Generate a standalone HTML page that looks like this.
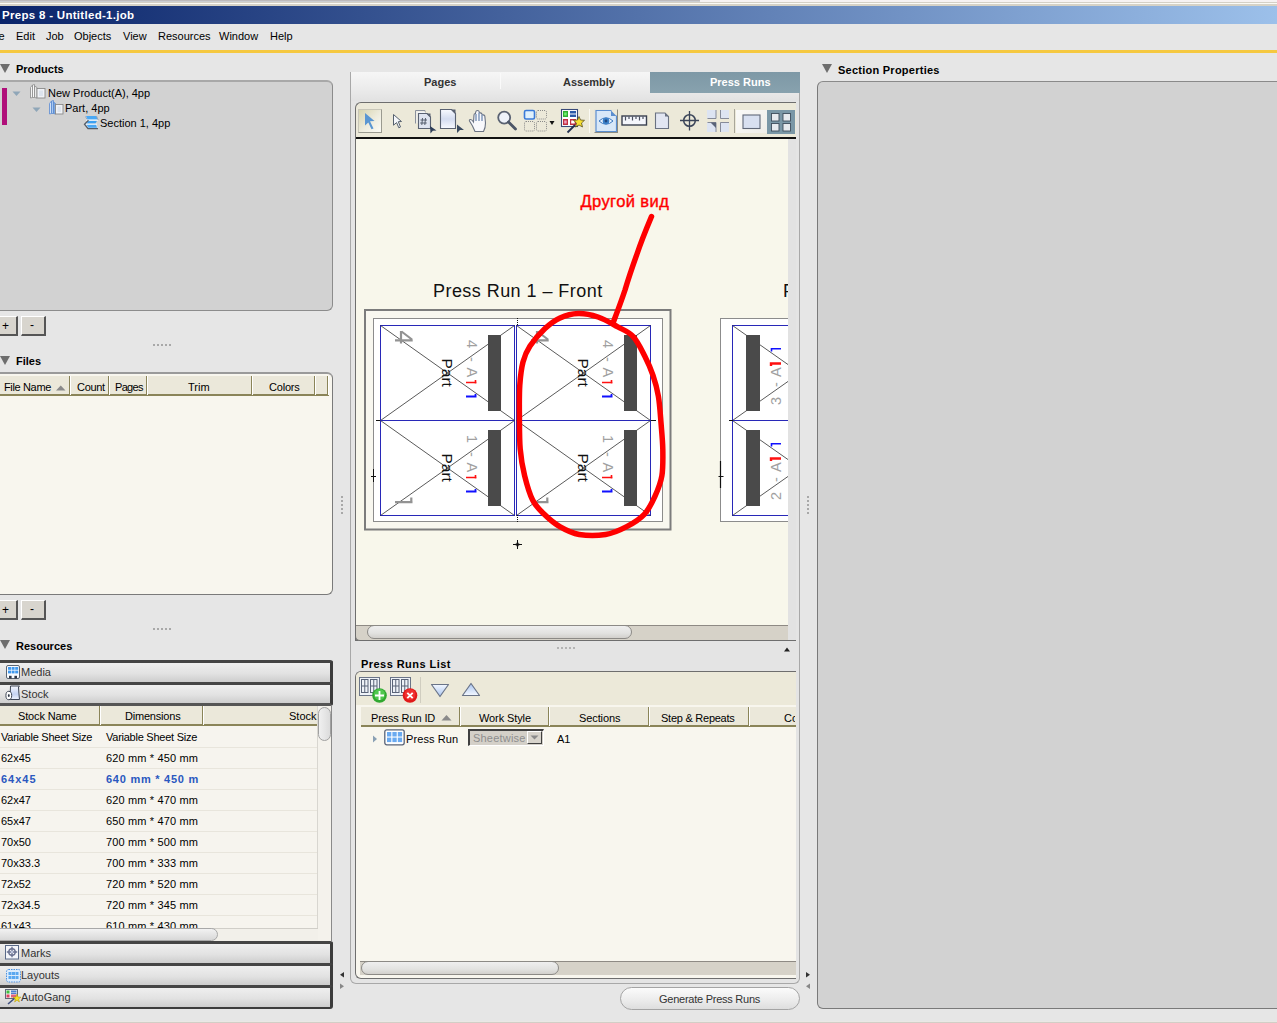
<!DOCTYPE html>
<html><head><meta charset="utf-8">
<style>
*{margin:0;padding:0;box-sizing:border-box}
html,body{width:1277px;height:1023px;overflow:hidden;background:#e6e6e6;font-family:"Liberation Sans",sans-serif;font-size:11px;color:#000}
.a{position:absolute}
.t{position:absolute;white-space:nowrap;line-height:1}
.b{font-weight:bold}
.tri{position:absolute;width:0;height:0;border-left:5px solid transparent;border-right:5px solid transparent;border-top:9.5px solid #6e6e6e}
.btn{position:absolute;background:#d8d5ce;border-top:1px solid #fff;border-left:1px solid #fff;border-right:2px solid #555;border-bottom:2px solid #555}
.hdr{position:absolute;background:#ebe8da;border-bottom:2px solid #8a8458}
.sep{position:absolute;top:0;bottom:0;width:2px;background:#8a8458;border-right:1px solid #fff}
.acc{position:absolute;left:-4px;width:337px;height:25px;border:3px solid #3c3c3c;border-top-color:#454545;border-left:none;border-radius:0 3px 3px 0;background:linear-gradient(#efefef,#e2e2e2 55%,#cdcdcd)}
.acc .t{color:#333;font-size:11px}
.dots{position:absolute;height:2px;background:repeating-linear-gradient(90deg,#a8a8a8 0 2px,transparent 2px 4px)}
.vdots{position:absolute;width:2px;background:repeating-linear-gradient(180deg,#a8a8a8 0 2px,transparent 2px 4px)}
</style></head><body>

<!-- top strip -->
<div class="a" style="left:0;top:0;width:1277px;height:6px;background:linear-gradient(#d4d0c6 0,#d4d0c6 3px,#fafaf6 3px,#fafaf6 4px,#d6d2c6 4px)"></div>
<div class="a" style="left:0;top:0;width:700px;height:2px;background:linear-gradient(#b6b0b0,#d2d8de)"></div>
<div class="a" style="left:700px;top:0;width:577px;height:2px;background:#f6f2f2"></div>
<!-- title bar -->
<div class="a" style="left:0;top:6px;width:1277px;height:18px;background:linear-gradient(90deg,#0a246a,#9cc0ea)"></div>
<div class="t b" style="left:2px;top:10px;color:#fff;font-size:11.5px;letter-spacing:0.3px">Preps 8 - Untitled-1.job</div>

<!-- menu -->
<div class="a" style="left:0;top:24px;width:1277px;height:26px;background:#e6e6e6"></div>
<div class="t" style="left:-13px;top:31px">File</div>
<div class="t" style="left:16px;top:31px">Edit</div>
<div class="t" style="left:46px;top:31px">Job</div>
<div class="t" style="left:74px;top:31px">Objects</div>
<div class="t" style="left:123px;top:31px">View</div>
<div class="t" style="left:158px;top:31px">Resources</div>
<div class="t" style="left:219px;top:31px">Window</div>
<div class="t" style="left:270px;top:31px">Help</div>
<div class="a" style="left:0;top:50px;width:1277px;height:3px;background:#f5c840"></div>

<!-- LEFT COLUMN -->
<div class="tri" style="left:0;top:64px"></div>
<div class="t b" style="left:16px;top:64px">Products</div>
<div class="a" style="left:-6px;top:80px;width:339px;height:231px;background:#d2d2d2;border:1px solid #8c8c8c;border-top:2px solid #a8a8a8;border-radius:6px"></div>


<!-- products tree -->
<div class="a" style="left:2px;top:88px;width:5px;height:37px;background:#b0107a"></div>
<svg class="a" style="left:12px;top:91px" width="9" height="6"><path d="M0.5 0.5 L8.5 0.5 L4.5 5 Z" fill="#8fa6b8"/></svg>
<svg class="a" style="left:29px;top:84px" width="17" height="15" viewBox="0 0 17 15">
<path d="M1.5 3.5 L3.5 1 L3.5 13.5 L1.5 14 Z" fill="#f4f4f4" stroke="#8a8a8a" stroke-width="0.8"/>
<path d="M3.5 1 L5.5 0.5 L5.5 13.5 L3.5 13.5 Z" fill="#fafafa" stroke="#8a8a8a" stroke-width="0.8"/>
<path d="M5.5 2 L8 3.5 L8 14 L5.5 13.5 Z" fill="#eaeaea" stroke="#8a8a8a" stroke-width="0.8"/>
<rect x="8" y="4.5" width="8" height="9.5" fill="#f0f2f6" stroke="#8a8a8a" stroke-width="0.9"/>
<rect x="10" y="6.5" width="4" height="5.5" fill="#dde4ee"/>
</svg>
<div class="t" style="left:48px;top:88px">New Product(A), 4pp</div>
<svg class="a" style="left:32px;top:107px" width="9" height="6"><path d="M0.5 0.5 L8.5 0.5 L4.5 5 Z" fill="#8fa6b8"/></svg>
<svg class="a" style="left:48px;top:100px" width="16" height="15" viewBox="0 0 16 15">
<path d="M1.5 3.5 L3.5 1 L3.5 13.5 L1.5 14 Z" fill="#cfe0f6" stroke="#5b8ad0" stroke-width="0.8"/>
<path d="M3.5 1 L5.5 0.5 L5.5 13.5 L3.5 13.5 Z" fill="#a9c8f0" stroke="#5b8ad0" stroke-width="0.8"/>
<path d="M5.5 2 L7.5 3.5 L7.5 14 L5.5 13.5 Z" fill="#7ea8e0" stroke="#5b8ad0" stroke-width="0.8"/>
<rect x="7.5" y="4.5" width="7.5" height="9.5" fill="#f0f2f6" stroke="#8a8a8a" stroke-width="0.9"/>
<rect x="9.5" y="6.5" width="3.5" height="5.5" fill="#dde4ee"/>
</svg>
<div class="t" style="left:65px;top:103px">Part, 4pp</div>
<svg class="a" style="left:83px;top:115px" width="16" height="15" viewBox="0 0 16 15">
<path d="M3 1 L13.5 1 L15 5 L5 5.5 L2 9 L5 13.5 L15 13.5 L13.5 9.5 L4 9 L6 5.5 L3 5 Z" fill="#cfe6fa"/>
<path d="M3 1 H13.5 L14.8 4.5 H4.5 Z" fill="#4aa8f4"/>
<path d="M5.5 5.8 H14 L12.5 8.6 H3.5 Z" fill="#3aa0f2"/>
<path d="M3.5 9.6 H13 L14 12.8 H5.5 Z" fill="#4aa8f4"/>
<path d="M3 5.2 H15 M2.5 9.2 H14" stroke="#f4faff" stroke-width="1"/>
<path d="M5.5 5.3 L1.5 9.2 L5 13.6 H15" fill="none" stroke="#555c66" stroke-width="1.3"/>
<path d="M2.5 1.5 L4 4.5 M13.5 1 L15.2 5" fill="none" stroke="#98a2b0" stroke-width="0.9"/>
</svg>
<div class="t" style="left:100px;top:118px">Section 1, 4pp</div>
<div class="btn" style="left:-4px;top:316px;width:22px;height:20px"></div>
<div class="t" style="left:2px;top:320px;font-size:12px">+</div>
<div class="btn" style="left:21px;top:316px;width:25px;height:20px"></div>
<div class="t" style="left:30px;top:319px;font-size:12px">-</div>
<div class="dots" style="left:153px;top:344px;width:20px"></div>

<div class="tri" style="left:0;top:356px"></div>
<div class="t b" style="left:16px;top:356px">Files</div>
<div class="a" style="left:-6px;top:372px;width:339px;height:223px;background:#f8f6ee;border:1px solid #7a7a7a;border-top:2px solid #9a9a9a;border-radius:6px"></div>
<div class="hdr" style="left:0;top:376px;width:329px;height:20px"></div>


<div class="sep" style="left:69px;top:376px;height:19px;bottom:auto"></div>
<div class="sep" style="left:108px;top:376px;height:19px;bottom:auto"></div>
<div class="sep" style="left:146px;top:376px;height:19px;bottom:auto"></div>
<div class="sep" style="left:251px;top:376px;height:19px;bottom:auto"></div>
<div class="sep" style="left:314px;top:376px;height:19px;bottom:auto"></div>
<div class="sep" style="left:327px;top:376px;height:19px;bottom:auto"></div>
<div class="t" style="left:4px;top:382px;letter-spacing:-0.35px">File Name</div>
<svg class="a" style="left:56px;top:385px" width="10" height="6"><path d="M0 5.5 L9.5 5.5 L4.75 0.5 Z" fill="#8a8a8a"/></svg>
<div class="t" style="left:77px;top:382px;letter-spacing:-0.3px">Count</div>
<div class="t" style="left:115px;top:382px;letter-spacing:-0.7px">Pages</div>
<div class="t" style="left:188px;top:382px">Trim</div>
<div class="t" style="left:269px;top:382px;letter-spacing:-0.2px">Colors</div>
<div class="btn" style="left:-4px;top:600px;width:22px;height:20px"></div>
<div class="t" style="left:2px;top:604px;font-size:12px">+</div>
<div class="btn" style="left:21px;top:600px;width:25px;height:20px"></div>
<div class="t" style="left:30px;top:603px;font-size:12px">-</div>
<div class="dots" style="left:153px;top:628px;width:20px"></div>

<div class="tri" style="left:0;top:640px"></div>
<div class="t b" style="left:16px;top:641px">Resources</div>

<div class="acc" style="top:660px"></div>
<div class="acc" style="top:682px;height:24px;border-bottom-color:#555"></div>

<div class="acc" style="top:941px"></div>
<div class="acc" style="top:963px"></div>
<div class="acc" style="top:985px;height:24px;border-bottom-width:2px"></div>


<!-- accordion labels -->
<svg class="a" style="left:6px;top:665px" width="14" height="14" viewBox="0 0 14 14">
<rect x="0.5" y="0.5" width="13" height="13" rx="1.5" fill="#f8fbff" stroke="#5a6472" stroke-width="1"/>
<g fill="#3f98ee"><rect x="2" y="2" width="3" height="2.8"/><rect x="5.6" y="2" width="3" height="2.8"/><rect x="9.2" y="2" width="3" height="2.8"/><rect x="2" y="5.6" width="3" height="2.8"/><rect x="5.6" y="5.6" width="3" height="2.8"/><rect x="9.2" y="5.6" width="3" height="2.8"/></g>
<rect x="3" y="10.8" width="2.6" height="2.7" fill="#2e3646"/><rect x="8.4" y="10.8" width="2.6" height="2.7" fill="#2e3646"/>
</svg>
<div class="t" style="left:21px;top:667px;color:#333">Media</div>
<svg class="a" style="left:5px;top:685px" width="16" height="16" viewBox="0 0 16 16">
<defs><linearGradient id="stg" x1="0" y1="0" x2="0" y2="1"><stop offset="0" stop-color="#f6f8fe"/><stop offset="0.6" stop-color="#c4d2f2"/><stop offset="1" stop-color="#eef2fc"/></linearGradient></defs>
<path d="M5.5 1 H14.5 L13.5 2 Q13.8 8 14.5 14.5 H5 Z" fill="url(#stg)" stroke="#3c4454" stroke-width="1"/>
<ellipse cx="3.8" cy="10.5" rx="2.9" ry="4.2" fill="#fff" stroke="#3c4454" stroke-width="1"/>
<ellipse cx="3.8" cy="10.5" rx="0.9" ry="1.6" fill="#2e3646"/>
</svg>
<div class="t" style="left:21px;top:689px;color:#333">Stock</div>

<!-- stock table -->
<div class="a" style="left:0;top:706px;width:318px;height:222px;background:#f6f4ee;overflow:hidden">
  <div class="hdr" style="left:0;top:0;width:318px;height:20px"></div>
  <div class="sep" style="left:99px;top:0;height:19px;bottom:auto"></div>
  <div class="sep" style="left:202px;top:0;height:19px;bottom:auto"></div>
  <div class="t" style="left:18px;top:5px;letter-spacing:-0.15px">Stock Name</div>
  <div class="t" style="left:125px;top:5px;letter-spacing:-0.2px">Dimensions</div>
  <div class="t" style="left:289px;top:5px">Stock</div>
  <div class="a" style="left:0;top:41px;width:318px;height:1px;background:#e8e5dc"></div>
  <div class="a" style="left:0;top:62px;width:318px;height:1px;background:#e8e5dc"></div>
  <div class="a" style="left:0;top:83px;width:318px;height:1px;background:#e8e5dc"></div>
  <div class="a" style="left:0;top:104px;width:318px;height:1px;background:#e8e5dc"></div>
  <div class="a" style="left:0;top:125px;width:318px;height:1px;background:#e8e5dc"></div>
  <div class="a" style="left:0;top:146px;width:318px;height:1px;background:#e8e5dc"></div>
  <div class="a" style="left:0;top:167px;width:318px;height:1px;background:#e8e5dc"></div>
  <div class="a" style="left:0;top:188px;width:318px;height:1px;background:#e8e5dc"></div>
  <div class="a" style="left:0;top:209px;width:318px;height:1px;background:#e8e5dc"></div>
  <div class="t" style="left:1px;top:26px;letter-spacing:-0.25px">Variable Sheet Size</div>
  <div class="t" style="left:106px;top:26px;letter-spacing:-0.25px">Variable Sheet Size</div>
  <div class="t" style="left:1px;top:47px">62x45</div><div class="t" style="left:106px;top:47px;letter-spacing:0.15px">620 mm * 450 mm</div>
  <div class="t b" style="left:1px;top:68px;color:#2a58c0;letter-spacing:1px">64x45</div><div class="t b" style="left:106px;top:68px;color:#2a58c0;letter-spacing:0.75px">640 mm * 450 m</div>
  <div class="t" style="left:1px;top:89px">62x47</div><div class="t" style="left:106px;top:89px;letter-spacing:0.15px">620 mm * 470 mm</div>
  <div class="t" style="left:1px;top:110px">65x47</div><div class="t" style="left:106px;top:110px;letter-spacing:0.15px">650 mm * 470 mm</div>
  <div class="t" style="left:1px;top:131px">70x50</div><div class="t" style="left:106px;top:131px;letter-spacing:0.15px">700 mm * 500 mm</div>
  <div class="t" style="left:1px;top:152px">70x33.3</div><div class="t" style="left:106px;top:152px;letter-spacing:0.15px">700 mm * 333 mm</div>
  <div class="t" style="left:1px;top:173px">72x52</div><div class="t" style="left:106px;top:173px;letter-spacing:0.15px">720 mm * 520 mm</div>
  <div class="t" style="left:1px;top:194px">72x34.5</div><div class="t" style="left:106px;top:194px;letter-spacing:0.15px">720 mm * 345 mm</div>
  <div class="t" style="left:1px;top:215px">61x43</div><div class="t" style="left:106px;top:215px;letter-spacing:0.15px">610 mm * 430 mm</div>
</div>
<!-- v scrollbar -->
<div class="a" style="left:317px;top:706px;width:15px;height:235px;background:#f4f2ec;border-left:1px solid #d8d6d0;border-right:1px solid #8a8a8a"></div>
<div class="a" style="left:318px;top:707px;width:13px;height:34px;border-radius:7px;background:linear-gradient(90deg,#f0f0f0,#dcdcdc);border:1px solid #a0a0a0"></div>
<!-- h scrollbar -->
<div class="a" style="left:0;top:928px;width:318px;height:13px;background:#f2f0ea;border-top:1px solid #d0cec8"></div>
<div class="a" style="left:-10px;top:928px;width:228px;height:13px;border-radius:7px;background:linear-gradient(#f2f2f2,#d8d8d8);border:1px solid #a8a8a8"></div>

<svg class="a" style="left:5px;top:945px" width="14" height="15" viewBox="0 0 14 15">
<rect x="0.5" y="0.5" width="13" height="13.5" fill="#f4f6fa" stroke="#5a6a88"/>
<circle cx="7" cy="7" r="3.2" fill="none" stroke="#6a7290" stroke-width="1.4"/>
<path d="M7 1.8 V12.2 M1.8 7 H12.2" stroke="#6a7290" stroke-width="1.4"/>
<circle cx="7" cy="7" r="1.2" fill="#c0c8e0"/>
</svg>
<div class="t" style="left:21px;top:948px;color:#333">Marks</div>
<svg class="a" style="left:6px;top:969px" width="15" height="14" viewBox="0 0 15 14">
<rect x="0.5" y="0.5" width="14" height="12.5" rx="2" fill="#dcecfc" stroke="#4a90e0" stroke-dasharray="1.5 1"/>
<g fill="#5aa8f0"><rect x="2.5" y="3" width="3" height="3"/><rect x="6" y="3" width="3" height="3"/><rect x="9.5" y="3" width="3" height="3"/><rect x="2.5" y="7" width="3" height="3"/><rect x="6" y="7" width="3" height="3"/><rect x="9.5" y="7" width="3" height="3"/></g>
</svg>
<div class="t" style="left:21px;top:970px;color:#333">Layouts</div>
<svg class="a" style="left:5px;top:989px" width="17" height="16" viewBox="0 0 17 16">
<rect x="0.5" y="0.5" width="12" height="9" fill="#f0f0f0" stroke="#606878"/>
<rect x="1.5" y="1.5" width="3" height="3" fill="#40c040"/><rect x="6" y="1.5" width="5.5" height="1.5" fill="#4a80d0"/><rect x="6" y="3.5" width="5.5" height="1.5" fill="#4a80d0"/>
<rect x="1.5" y="5.5" width="3" height="3" fill="#e04060"/><rect x="6" y="5.5" width="5.5" height="3" fill="#e06080"/>
<path d="M3 15 L10 9" stroke="#405080" stroke-width="1.6"/>
<path d="M12 5 L13 8 L16 8.2 L13.6 10 L14.4 13 L12 11.2 L9.6 13 L10.4 10 L8 8.2 L11 8 Z" fill="#f4e020" stroke="#b09000" stroke-width="0.5"/>
</svg>
<div class="t" style="left:21px;top:992px;color:#333">AutoGang</div>

<!-- CENTER -->
<div class="a" style="left:350px;top:72px;width:450px;height:912px;border:1px solid #a8a8a8;border-top:none;border-radius:0 0 6px 6px;background:#e4e4e4"></div>


<!-- tab bar -->
<div class="a" style="left:351px;top:72px;width:448px;height:29px;background:linear-gradient(#f6f6f6,#ececec 55%,#e2e2e2)"></div>
<div class="a" style="left:500px;top:73px;width:1px;height:16px;background:#dcdcdc;border-right:1px solid #fafafa"></div>
<div class="t b" style="left:424px;top:77px;color:#333">Pages</div>
<div class="t b" style="left:563px;top:77px;color:#333">Assembly</div>
<div class="a" style="left:650px;top:72px;width:150px;height:21px;background:linear-gradient(#7d98a6,#88a2ae)"></div>
<div class="t b" style="left:710px;top:77px;color:#fff">Press Runs</div>

<!-- toolbar -->
<div class="a" style="left:355px;top:102px;width:441px;height:36px;background:#ece9d9;border-top:1px solid #6e6e6e;border-left:1px solid #6e6e6e;border-radius:6px 0 0 0"></div>
<div class="a" style="left:356px;top:137px;width:440px;height:2px;background:#111"></div>


<!-- CANVAS START -->
<svg class="a" style="left:356px;top:139px" width="432" height="486" viewBox="356 139 432 486" font-family="Liberation Sans">
<rect x="356" y="139" width="432" height="486" fill="#f8f7eb"/>
<text x="433" y="297" font-size="18" fill="#111" letter-spacing="0.45">Press Run 1 – Front</text>
<text x="783" y="297" font-size="18" fill="#111">P</text>
<rect x="365" y="310" width="305.5" height="219.5" fill="#f8f7ef" stroke="#7c7c7c" stroke-width="2"/>
<rect x="373.5" y="318.5" width="289" height="203" fill="#fff" stroke="#8c8c8c" stroke-width="1"/>
<rect x="380.5" y="325.5" width="134" height="95" fill="#fff" stroke="#2828b8" stroke-width="1"/>
<path d="M380.5 325.5 L514.5 420.5 M514.5 325.5 L380.5 420.5" stroke="#303030" stroke-width="0.8"/>
<rect x="380.5" y="420.5" width="134" height="95" fill="#fff" stroke="#2828b8" stroke-width="1"/>
<path d="M380.5 420.5 L514.5 515.5 M514.5 420.5 L380.5 515.5" stroke="#303030" stroke-width="0.8"/>
<rect x="516.5" y="325.5" width="134" height="95" fill="#fff" stroke="#2828b8" stroke-width="1"/>
<path d="M516.5 325.5 L650.5 420.5 M650.5 325.5 L516.5 420.5" stroke="#303030" stroke-width="0.8"/>
<rect x="516.5" y="420.5" width="134" height="95" fill="#fff" stroke="#2828b8" stroke-width="1"/>
<path d="M516.5 420.5 L650.5 515.5 M650.5 420.5 L516.5 515.5" stroke="#303030" stroke-width="0.8"/>
<rect x="488" y="335" width="13" height="76" fill="#4a4a4a"/>
<rect x="488" y="430" width="13" height="76" fill="#4a4a4a"/>
<rect x="624" y="335" width="13" height="76" fill="#4a4a4a"/>
<rect x="624" y="430" width="13" height="76" fill="#4a4a4a"/>
<text transform="translate(441.5,358.5) rotate(90)" font-size="15.5" fill="#111">Part</text>
<g transform="translate(466.5,325) rotate(90)" font-size="14.5" fill="#a0a0a0"><text x="15" y="0">4</text><text x="32" y="0">-</text><text x="42.5" y="0">A</text></g>
<path d="M466 382.5 H476.5 M475.5 380 V383.5" stroke="#ff1010" stroke-width="1.6" fill="none"/>
<path d="M466 396.5 H476.5 M475.5 394 V397.5" stroke="#1010ff" stroke-width="1.8" fill="none"/>
<path d="M401 331 V343.6 M395 340.3 H412.7 M401.5 331.5 L412 339.5" stroke="#939393" stroke-width="2.2" fill="none"/>
<text transform="translate(441.5,453.5) rotate(90)" font-size="15.5" fill="#111">Part</text>
<g transform="translate(466.5,420) rotate(90)" font-size="14.5" fill="#a0a0a0"><text x="15" y="0">1</text><text x="32" y="0">-</text><text x="42.5" y="0">A</text></g>
<path d="M466 477.5 H476.5 M475.5 475 V478.5" stroke="#ff1010" stroke-width="1.6" fill="none"/>
<path d="M466 491.5 H476.5 M475.5 489 V492.5" stroke="#1010ff" stroke-width="1.8" fill="none"/>
<path d="M395 502.2 H412.5 M411.3 497.5 V502" stroke="#939393" stroke-width="2.2" fill="none"/>
<text transform="translate(577.5,358.5) rotate(90)" font-size="15.5" fill="#111">Part</text>
<g transform="translate(602.5,325) rotate(90)" font-size="14.5" fill="#a0a0a0"><text x="15" y="0">4</text><text x="32" y="0">-</text><text x="42.5" y="0">A</text></g>
<path d="M602 382.5 H612.5 M611.5 380 V383.5" stroke="#ff1010" stroke-width="1.6" fill="none"/>
<path d="M602 396.5 H612.5 M611.5 394 V397.5" stroke="#1010ff" stroke-width="1.8" fill="none"/>
<path d="M537 331 V343.6 M531 340.3 H548.7 M537.5 331.5 L548 339.5" stroke="#939393" stroke-width="2.2" fill="none"/>
<text transform="translate(577.5,453.5) rotate(90)" font-size="15.5" fill="#111">Part</text>
<g transform="translate(602.5,420) rotate(90)" font-size="14.5" fill="#a0a0a0"><text x="15" y="0">1</text><text x="32" y="0">-</text><text x="42.5" y="0">A</text></g>
<path d="M602 477.5 H612.5 M611.5 475 V478.5" stroke="#ff1010" stroke-width="1.6" fill="none"/>
<path d="M602 491.5 H612.5 M611.5 489 V492.5" stroke="#1010ff" stroke-width="1.8" fill="none"/>
<path d="M531 502.2 H548.5 M547.3 497.5 V502" stroke="#939393" stroke-width="2.2" fill="none"/>
<path d="M517.5 318 V325 M517.5 515 V522" stroke="#111" stroke-width="1" stroke-dasharray="1 1"/>
<path d="M373.5 469 V482 M371 476.5 H376" stroke="#111" stroke-width="1"/>
<path d="M517.5 540 V549 M513 544.5 H522" stroke="#111" stroke-width="1"/><circle cx="517.5" cy="544.5" r="1.6" fill="none" stroke="#111" stroke-width="0.8"/>
<path d="M651 420.5 H656 M376 420.5 H380" stroke="#111" stroke-width="1"/>
<rect x="720.5" y="318.5" width="200" height="203" fill="#fff" stroke="#8c8c8c" stroke-width="1"/>
<rect x="732.5" y="325.5" width="135" height="95" fill="#fff" stroke="#2828b8" stroke-width="1"/>
<path d="M732.5 325.5 L867.5 420.5 M867.5 325.5 L732.5 420.5" stroke="#303030" stroke-width="0.8"/>
<rect x="746" y="335" width="14" height="76" fill="#4a4a4a"/>
<rect x="732.5" y="420.5" width="135" height="95" fill="#fff" stroke="#2828b8" stroke-width="1"/>
<path d="M732.5 420.5 L867.5 515.5 M867.5 420.5 L732.5 515.5" stroke="#303030" stroke-width="0.8"/>
<rect x="746" y="430" width="14" height="76" fill="#4a4a4a"/>
<g transform="translate(781,325) rotate(-90)" font-size="14.5" fill="#a0a0a0"><text x="-80" y="0">3</text><text x="-62" y="0">-</text><text x="-52" y="0">A</text></g>
<path d="M771 366 V363.5 H781" stroke="#ff1010" stroke-width="2.4" fill="none"/>
<path d="M771.5 351.5 V348.8 H781" stroke="#1010ff" stroke-width="1.6" fill="none"/>
<g transform="translate(781,420) rotate(-90)" font-size="14.5" fill="#a0a0a0"><text x="-80" y="0">2</text><text x="-62" y="0">-</text><text x="-52" y="0">A</text></g>
<path d="M771 461 V458.5 H781" stroke="#ff1010" stroke-width="2.4" fill="none"/>
<path d="M771.5 446.5 V443.8 H781" stroke="#1010ff" stroke-width="1.6" fill="none"/>
<path d="M720.5 461 V488 M718.5 476.5 H723.5" stroke="#111" stroke-width="1.2"/>
<path d="M729 420.5 H733" stroke="#111" stroke-width="1"/>
<text x="580.5" y="206.5" font-size="16.5" fill="#ff0000" stroke="#ff0000" stroke-width="0.4" letter-spacing="0.4">Другой вид</text>
<path d="M651.5 216.5 C645 232 640 245 637 254 C632 268 628 280 625 290 C620 305 616 315 613 323" fill="none" stroke="#ff0000" stroke-width="5.5" stroke-linecap="round"/>
<path d="M617.3 326.6 C623.1 329.8 628.4 331.5 633 336.4 C637.6 341.3 641.4 349.5 644.7 356 C648.0 362.5 650.7 368.6 653 375.3 C655.3 382.0 657.1 388.5 658.4 396.4 C659.7 404.3 660.3 414.0 661 422.8 C661.7 431.6 662.6 440.2 662.8 449 C662.9 457.8 663.2 467.7 661.9 475.6 C660.6 483.6 657.7 490.2 654.8 496.7 C651.9 503.1 649.0 509.3 644.3 514.3 C639.6 519.3 633.2 523.2 626.7 526.6 C620.2 530.0 613.5 533.2 605.6 534.5 C597.7 535.8 586.8 535.8 579.2 534.5 C571.6 533.2 565.7 530.0 559.8 526.6 C553.9 523.2 548.5 518.4 544 514 C539.5 509.6 535.8 506.4 532.6 500 C529.4 493.6 526.7 484.1 524.6 475.6 C522.5 467.1 521.1 459.3 520.2 449 C519.3 438.7 519.5 424.7 519.4 414 C519.3 403.3 519.2 393.7 519.8 385 C520.4 376.3 521.3 368.5 523 362 C524.7 355.5 526.3 351.6 530 346 C533.7 340.4 540.0 333.3 545 328.6 C550.0 323.9 554.5 320.5 560 318 C565.5 315.5 571.9 313.7 578.2 313.5 C584.5 313.3 591.5 314.8 598 317 C604.5 319.2 611.5 323.4 617.3 326.6 Z" fill="none" stroke="#ff0000" stroke-width="5.5" stroke-linejoin="round"/>
</svg>
<!-- CANVAS END -->
<!-- toolbar icons -->
<div class="a" style="left:358px;top:109px;width:24px;height:24px;background:linear-gradient(135deg,#d8d4ae,#eeecde 55%,#fbfbf6);border:1px solid #c8c6b8;border-right-color:#9a9a90;border-bottom-color:#9a9a90"></div>
<svg class="a" style="left:358px;top:109px" width="24" height="24" viewBox="0 0 24 24">
<path d="M7 4 L16.5 12 L12 12.3 L15.5 19.5 L13.5 20.3 L10.3 13.5 L7 16.5 Z" fill="#5a96d2"/>
</svg>
<svg class="a" style="left:390px;top:112px" width="14" height="18" viewBox="0 0 14 18">
<path d="M3.5 2.5 L11.5 9.5 L8.3 9.7 L10.5 15 L8.8 15.8 L6.6 10.6 L3.5 13.2 Z" fill="#f4f6fa" stroke="#55606e" stroke-width="1" stroke-linejoin="round"/>
</svg>
<svg class="a" style="left:414px;top:109px" width="25" height="25" viewBox="0 0 25 25">
<path d="M1.5 14.5 L1.5 1.5 L11 1.5 L11 3.5" fill="none" stroke="#8a909c" stroke-width="1"/>
<path d="M2.5 2.5 L11 2.5 L11 4 L3.5 4 L3.5 14 L2.5 14 Z" fill="#f2f4f8"/>
<path d="M4.5 4.5 L13 4.5 L16.5 8 L16.5 19.5 L4.5 19.5 Z" fill="#dfe4f0" stroke="#5a6272" stroke-width="1.1"/>
<path d="M12.5 4.5 L16.5 8.5 L16.5 4.5 Z" fill="#5a6272"/>
<path d="M8.5 9 L7.8 16 M11.5 9 L10.8 16 M6.5 11 H13 M6.2 14 H12.7" stroke="#4a5262" stroke-width="0.9"/>
<path d="M16 17 L22.5 21.5 L18.8 21.8 L16.5 24.5 Z" fill="#2e3e58"/>
</svg>
<svg class="a" style="left:439px;top:108px" width="26" height="26" viewBox="0 0 26 26">
<defs><linearGradient id="pg" x1="0" y1="0" x2="0" y2="1"><stop offset="0" stop-color="#f8faff"/><stop offset="0.5" stop-color="#d4dcf0"/><stop offset="1" stop-color="#f8faff"/></linearGradient></defs>
<path d="M1.5 1.5 L12.5 1.5 L16.5 5.5 L16.5 20.5 L1.5 20.5 Z" fill="url(#pg)" stroke="#5a6272" stroke-width="1.1"/>
<path d="M12 1.5 L16.5 1.5 L16.5 6 Z" fill="#5a6272"/>
<path d="M18 16.5 L25 22 L21 22 L18 25 Z" fill="#3a4a60"/>
</svg>
<svg class="a" style="left:468px;top:109px" width="21" height="24" viewBox="0 0 21 24">
<path d="M7 22.5 L4.5 17 L1.5 12 Q1 10.5 2.5 10.5 Q4 10.5 5.5 13 L6 6 Q6 4.5 7.5 4.5 L7.7 3 Q8 1.5 9.5 1.5 Q11 1.5 11.3 3 L11.5 4 Q13 3.5 14 5 L14.2 6 Q16 5.5 16.8 7 L17.5 14 Q17.5 19 15.5 22.5 Z" fill="#f8f8fc" stroke="#6a7282" stroke-width="1.1"/>
<path d="M8 5 L8 12 M11 3.5 L11 12 M14 5.5 L14 12" stroke="#8aa0c0" stroke-width="1.6"/>
</svg>
<svg class="a" style="left:496px;top:110px" width="22" height="22" viewBox="0 0 22 22">
<circle cx="8.2" cy="7.6" r="6" fill="#eef2fa" stroke="#5a6272" stroke-width="1.8"/>
<path d="M12.5 12 L19.5 19" stroke="#4c5668" stroke-width="2.8" stroke-linecap="round"/>
</svg>
<svg class="a" style="left:523px;top:109px" width="34" height="24" viewBox="0 0 34 24">
<rect x="1.5" y="1.5" width="10" height="8.5" rx="1.5" fill="#dff0fc" stroke="#3a7ad8" stroke-width="1.6"/>
<rect x="13.5" y="1.5" width="10" height="8.5" rx="1.5" fill="none" stroke="#8a8a8a" stroke-dasharray="1 1"/>
<rect x="1.5" y="12.5" width="10" height="9.5" rx="1.5" fill="none" stroke="#8a8a8a" stroke-dasharray="1 1"/>
<rect x="13.5" y="12.5" width="10" height="9.5" rx="1.5" fill="none" stroke="#8a8a8a" stroke-dasharray="1 1"/>
<path d="M26.5 12 L31.5 12 L29 16 Z" fill="#111"/>
</svg>
<svg class="a" style="left:560px;top:108px" width="27" height="26" viewBox="0 0 27 26">
<rect x="1.5" y="1.5" width="16" height="17" fill="#fff" stroke="#3a4a78" stroke-width="1.1"/>
<rect x="3" y="3" width="5" height="6" fill="#30b030"/><rect x="4.2" y="4.5" width="2.5" height="3" fill="#70f070"/>
<rect x="10" y="3" width="6" height="2.5" fill="#2a5aa8"/><rect x="10" y="6.5" width="6" height="2.5" fill="#2a5aa8"/>
<rect x="3" y="11" width="5" height="6" fill="#c03040"/><rect x="4.2" y="12.5" width="2.5" height="3" fill="#f0a0c0"/>
<rect x="10" y="11" width="6" height="6" fill="#c03040"/><rect x="11.2" y="12.5" width="3.5" height="3" fill="#fff"/>
<path d="M7.5 24.5 L15 17" stroke="#223050" stroke-width="1.8"/>
<path d="M19 8.5 L20.5 12 L24.5 12.3 L21.5 15 L22.5 19 L19 17 L15.5 19 L16.5 15 L13.5 12.3 L17.5 12 Z" fill="#f6e030" stroke="#5a5020" stroke-width="0.8"/>
</svg>
<div class="a" style="left:589px;top:109px;width:1px;height:24px;background:#a8a69a;border-right:1px solid #fbfaf4"></div>
<div class="a" style="left:594px;top:109px;width:24px;height:24px;border:1px solid #8a8a80;border-top-color:#e8e6d8;border-left-color:#e8e6d8"></div>
<svg class="a" style="left:595px;top:110px" width="22" height="22" viewBox="0 0 22 22">
<path d="M1 0.5 L16 0.5 L21.5 6 L21.5 21.5 L1 21.5 Z" fill="#d8e8f8" stroke="#5a8ed0" stroke-width="1.2"/>
<path d="M16 0.5 L21.5 6 L16 6 Z" fill="#5a8ed0"/><path d="M16 0.5 L21.5 0.5 L21.5 6 Z" fill="#eceada"/>
<path d="M4 11 Q11 4.5 18 11 Q11 17.5 4 11 Z" fill="#eaf2fc" stroke="#3a78c0" stroke-width="1"/>
<circle cx="11" cy="11" r="3.3" fill="#3a80c8"/><circle cx="11" cy="11" r="1.4" fill="#204880"/>
</svg>
<svg class="a" style="left:621px;top:115px" width="27" height="12" viewBox="0 0 27 12">
<rect x="1" y="1" width="24.5" height="9" fill="#f4f6fc" stroke="#3a4050" stroke-width="1.4"/>
<path d="M4.5 1.5 V5.5 M8 1.5 V4 M11.5 1.5 V5.5 M15 1.5 V4 M18.5 1.5 V5.5 M22 1.5 V4" stroke="#4a5060" stroke-width="1.2"/>
</svg>
<svg class="a" style="left:654px;top:112px" width="16" height="18" viewBox="0 0 16 18">
<path d="M1.5 1 L11 1 L14.5 4.5 L14.5 16.5 L1.5 16.5 Z" fill="#e2e6f2" stroke="#6a7282" stroke-width="1.1"/>
<path d="M11 1 L14.5 4.5 L11 4.5 Z" fill="#6a7282"/>
</svg>
<svg class="a" style="left:679px;top:110px" width="21" height="22" viewBox="0 0 21 22">
<circle cx="10.5" cy="10.5" r="5.8" fill="none" stroke="#3a4458" stroke-width="1.5"/>
<path d="M10.5 1 V20.5 M1 10.5 H20" stroke="#3a4458" stroke-width="1.3"/>
</svg>
<svg class="a" style="left:706px;top:109px" width="24" height="24" viewBox="0 0 24 24">
<g fill="#dde4f2"><rect x="1" y="1" width="9" height="8.5"/><rect x="14" y="1" width="9" height="8.5"/><rect x="1" y="13.5" width="9" height="9.5"/><rect x="14" y="13.5" width="9" height="9.5"/></g>
<path d="M1.5 9.5 H10 V1 M14.5 1 V9.5 H23 M1.5 13.5 H10 V23 M14.5 23 V13.5 H23" fill="none" stroke="#7a8090" stroke-width="0.9"/>
<path d="M4.5 13.5 L10 13.5 L10 19 Z" fill="#5a6478"/>
</svg>
<div class="a" style="left:734px;top:109px;width:1px;height:24px;background:#a8a69a"></div>
<div class="a" style="left:736px;top:110px;width:31px;height:23px;background:linear-gradient(135deg,#fafaf8,#eeede8)"></div>
<svg class="a" style="left:742px;top:114px" width="19" height="16" viewBox="0 0 19 16">
<rect x="1" y="1" width="17" height="13.5" fill="#d8e0f0" stroke="#606878" stroke-width="1.1"/>
</svg>
<div class="a" style="left:767px;top:110px;width:28px;height:24px;background:#7a97a6"></div>
<svg class="a" style="left:767px;top:110px" width="28" height="24" viewBox="0 0 28 24">
<g fill="#e6eaee" stroke="#3e4e5c" stroke-width="0.9"><rect x="4.5" y="3.5" width="7.5" height="7.5"/><rect x="16" y="3.5" width="7.5" height="7.5"/><rect x="4.5" y="13.5" width="7.5" height="7.5"/><rect x="16" y="13.5" width="7.5" height="7.5"/></g>
</svg>


<!-- canvas frame sides + scrollbars -->
<div class="a" style="left:355px;top:138px;width:1px;height:503px;background:#6e6e6e"></div>
<div class="a" style="left:788px;top:139px;width:8px;height:501px;background:#e2e2e2"></div>
<div class="a" style="left:356px;top:625px;width:432px;height:15px;background:#d6d2c8;border-top:1px solid #8e8a84"></div>
<div class="a" style="left:367px;top:625px;width:265px;height:14px;border-radius:7px;background:linear-gradient(#efefef,#e2e2e0 60%,#d2d0cc);border:1px solid #8c8a86"></div>
<div class="a" style="left:355px;top:640px;width:441px;height:1px;background:#6e6e6e"></div>
<div class="a" style="left:355px;top:636px;width:6px;height:5px;border-left:1px solid #6e6e6e;border-bottom:1px solid #6e6e6e;border-radius:0 0 0 5px;background:#d6d2c8"></div>
<div class="dots" style="left:557px;top:647px;width:20px;background:repeating-linear-gradient(90deg,#b4b4b4 0 2px,transparent 2px 4px)"></div>
<svg class="a" style="left:783px;top:646px" width="8" height="6"><path d="M1 5.5 L7 5.5 L4 1.5 Z" fill="#222"/></svg>

<div class="t b" style="left:361px;top:659px;letter-spacing:0.45px">Press Runs List</div>

<!-- press runs list frame -->
<div class="a" style="left:355px;top:671px;width:441px;height:308px;background:#f8f6ee;border-top:1px solid #6e6e6e;border-left:1px solid #6e6e6e;border-bottom:1px solid #6e6e6e;border-radius:6px 0 0 6px"></div>
<div class="a" style="left:356px;top:672px;width:440px;height:33px;background:#ece9d9;border-radius:5px 0 0 0"></div>
<svg class="a" style="left:358px;top:676px" width="30" height="28" viewBox="0 0 30 28">
<rect x="1.5" y="1.5" width="20" height="18" fill="#eef2f8" stroke="#6a7488" stroke-width="1"/>
<g fill="none" stroke="#5a6478" stroke-width="1"><rect x="3.5" y="3.5" width="6.5" height="13"/><rect x="12.5" y="3.5" width="6.5" height="13"/><path d="M6.75 3.5 V16.5 M3.5 10 H10 M15.75 3.5 V16.5 M12.5 10 H19"/></g>
<circle cx="21.5" cy="19.5" r="7.3" fill="#30a830"/><circle cx="21.5" cy="18.5" r="5.5" fill="#50c850"/>
<path d="M21.5 15 V24 M17 19.5 H26" stroke="#fff" stroke-width="1.8"/>
</svg>
<svg class="a" style="left:389px;top:676px" width="30" height="28" viewBox="0 0 30 28">
<rect x="1.5" y="1.5" width="20" height="18" fill="#eef2f8" stroke="#6a7488" stroke-width="1"/>
<g fill="none" stroke="#5a6478" stroke-width="1"><rect x="3.5" y="3.5" width="6.5" height="13"/><rect x="12.5" y="3.5" width="6.5" height="13"/><path d="M6.75 3.5 V16.5 M3.5 10 H10 M15.75 3.5 V16.5 M12.5 10 H19"/></g>
<circle cx="21" cy="19.5" r="7.3" fill="#e01818"/><circle cx="21" cy="18.5" r="5.5" fill="#f03030"/>
<path d="M18.3 16.8 L23.7 22.2 M23.7 16.8 L18.3 22.2" stroke="#fff" stroke-width="1.9"/>
</svg>
<div class="a" style="left:420px;top:677px;width:1px;height:26px;background:#d0cdc0"></div>
<svg class="a" style="left:430px;top:683px" width="20" height="15" viewBox="0 0 20 15">
<defs><linearGradient id="tg" x1="0" y1="0" x2="0" y2="1"><stop offset="0" stop-color="#f4f8ff"/><stop offset="1" stop-color="#a8c4f0"/></linearGradient></defs>
<path d="M1.5 1.5 L18.5 1.5 L10 13.5 Z" fill="url(#tg)" stroke="#6a7488" stroke-width="1.2" stroke-linejoin="round"/>
</svg>
<svg class="a" style="left:461px;top:682px" width="20" height="15" viewBox="0 0 20 15">
<defs><linearGradient id="tg2" x1="0" y1="0" x2="0" y2="1"><stop offset="0" stop-color="#a8c4f0"/><stop offset="1" stop-color="#f4f8ff"/></linearGradient></defs>
<path d="M1.5 13.5 L18.5 13.5 L10 1.5 Z" fill="url(#tg2)" stroke="#6a7488" stroke-width="1.2" stroke-linejoin="round"/>
</svg>

<!-- press runs header -->
<div class="hdr" style="left:361px;top:707px;width:435px;height:20px"></div>
<div class="sep" style="left:459px;top:707px;height:19px;bottom:auto"></div>
<div class="sep" style="left:548px;top:707px;height:19px;bottom:auto"></div>
<div class="sep" style="left:648px;top:707px;height:19px;bottom:auto"></div>
<div class="sep" style="left:748px;top:707px;height:19px;bottom:auto"></div>
<div class="t" style="left:371px;top:713px;letter-spacing:-0.1px">Press Run ID</div>
<svg class="a" style="left:441px;top:714px" width="11" height="7"><path d="M0.5 6.5 L10.5 6.5 L5.5 1 Z" fill="#8a8a8a"/></svg>
<div class="t" style="left:479px;top:713px;letter-spacing:-0.1px">Work Style</div>
<div class="t" style="left:579px;top:713px;letter-spacing:-0.1px">Sections</div>
<div class="t" style="left:661px;top:713px;letter-spacing:-0.25px">Step &amp; Repeats</div>
<div class="a" style="left:780px;top:708px;width:15px;height:16px;overflow:hidden"><div class="t" style="left:4px;top:5px">Co</div></div>


<!-- press run row -->
<svg class="a" style="left:372px;top:735px" width="6" height="8"><path d="M1 0.5 L5 4 L1 7.5 Z" fill="#8aa0b4"/></svg>
<svg class="a" style="left:384px;top:729px" width="21" height="17" viewBox="0 0 21 17">
<rect x="0.8" y="0.8" width="19.4" height="15" rx="2" fill="#fff" stroke="#5a6478" stroke-width="1.3"/>
<g fill="#6aaaf0"><rect x="3" y="3" width="4.3" height="4.5"/><rect x="8.4" y="3" width="4.3" height="4.5"/><rect x="13.8" y="3" width="4.3" height="4.5"/><rect x="3" y="8.6" width="4.3" height="4.5"/><rect x="8.4" y="8.6" width="4.3" height="4.5"/><rect x="13.8" y="8.6" width="4.3" height="4.5"/></g>
</svg>
<div class="t" style="left:406px;top:734px;letter-spacing:0.1px">Press Run</div>
<div class="a" style="left:468px;top:729px;width:76px;height:17px;background:#d4d0c8;border-top:2px solid #404040;border-left:2px solid #404040;border-right:1px solid #fff;border-bottom:1px solid #fff"></div>
<div class="t" style="left:473px;top:733px;color:#8e8e8e;letter-spacing:0.2px">Sheetwise</div>
<div class="a" style="left:527px;top:731px;width:15px;height:13px;background:#d8d4cc;border-left:1px solid #fff;border-top:1px solid #fff;border-right:1px solid #404040;border-bottom:1px solid #404040"></div>
<svg class="a" style="left:530px;top:735px" width="9" height="5"><path d="M0.5 0.5 L8.5 0.5 L4.5 4.5 Z" fill="#8a8a8a"/></svg>
<div class="t" style="left:557px;top:734px">A1</div>

<!-- list h scrollbar -->
<div class="a" style="left:360px;top:961px;width:436px;height:14px;background:#d6d2c8;border-top:1px solid #8e8a84"></div>
<div class="a" style="left:361px;top:961px;width:198px;height:14px;border-radius:7px;background:linear-gradient(#efefef,#e2e2e0 60%,#d2d0cc);border:1px solid #8c8a86"></div>

<!-- side arrows -->
<svg class="a" style="left:339px;top:971px" width="6" height="20"><path d="M5 1 L5 6.5 L1 3.75 Z" fill="#333"/><path d="M1 12.5 L1 18 L5 15.25 Z" fill="#888"/></svg>
<svg class="a" style="left:805px;top:971px" width="6" height="20"><path d="M1 1 L1 6.5 L5 3.75 Z" fill="#333"/><path d="M5 12.5 L5 18 L1 15.25 Z" fill="#888"/></svg>
<div class="vdots" style="left:341px;top:496px;height:18px"></div>
<div class="vdots" style="left:807px;top:496px;height:18px"></div>

<!-- generate button -->
<div class="a" style="left:620px;top:987px;width:180px;height:23px;border-radius:12px;border:1px solid #a4a4a4;background:linear-gradient(#fbfbfb,#ebebeb 60%,#dedede)"></div>
<div class="t" style="left:659px;top:994px;color:#333;letter-spacing:-0.25px">Generate Press Runs</div>

<!-- RIGHT -->
<div class="tri" style="left:822px;top:64px"></div>
<div class="t b" style="left:838px;top:65px;letter-spacing:0.25px">Section Properties</div>
<div class="a" style="left:817px;top:81px;width:470px;height:928px;background:#d2d2d2;border:1px solid #7a7a7a;border-top:1px solid #8a8a8a;border-radius:6px"></div>
<div class="a" style="left:0;top:1021px;width:1277px;height:1px;background:#eae8e4"></div><div class="a" style="left:0;top:1022px;width:1277px;height:1px;background:#d2cec6"></div>

</body></html>
